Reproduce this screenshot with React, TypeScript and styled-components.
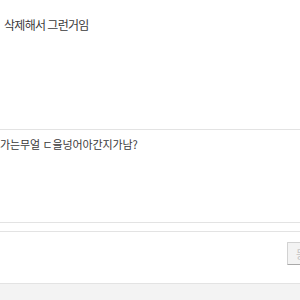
import React from "react";
import styled, { createGlobalStyle } from "styled-components";

const Global = createGlobalStyle`
  html, body { margin: 0; padding: 0; background: #ffffff; }
  body {
    width: 300px; height: 300px; overflow: hidden;
    font-family: "Noto Sans CJK KR", "Noto Sans", sans-serif;
  }
`;

const Page = styled.div`
  display: flex;
  flex-direction: column;
  width: 300px;
  height: 300px;
  overflow: hidden;
`;

const CommentList = styled.div`
  display: flex;
  flex-direction: column;
`;

const CommentItem = styled.div<{ $height: number; $top: number; $indent: number }>`
  height: ${(p) => p.$height}px;
  box-sizing: border-box;
  padding: ${(p) => p.$top}px 0 0 ${(p) => p.$indent}px;
  border-bottom: 1px solid #e3e3e3;
  flex-shrink: 0;
`;

const CommentText = styled.p<{ $size: number; $spacing: number }>`
  margin: 0;
  font-size: ${(p) => p.$size}px;
  line-height: 16px;
  letter-spacing: ${(p) => p.$spacing}px;
  color: #3a3a3a;
  white-space: nowrap;
`;

const WriteBox = styled.div`
  margin-top: 8px;
  height: 53px;
  box-sizing: border-box;
  border-top: 1px solid #e3e3e3;
  border-bottom: 1px solid #e3e3e3;
  display: flex;
  align-items: flex-start;
  padding-top: 10px;
  flex-shrink: 0;
`;

const InputArea = styled.div`
  flex: 1;
`;

const SubmitButton = styled.button`
  flex-shrink: 0;
  width: 40px;
  margin-right: -27px;
  height: 23px;
  box-sizing: border-box;
  background: #f3f3f3;
  border: 1px solid #d2d2d2;
  border-bottom-color: #a9a9a9;
  border-radius: 1px;
  padding: 0 0 0 8px;
  text-align: left;
  font-family: "Noto Sans CJK KR", sans-serif;
  font-size: 11px;
  color: #c4c4c4;
  white-space: nowrap;
  overflow: hidden;
`;

const Footer = styled.div`
  flex: 1;
  background: #f3f3f3;
`;

export default function App() {
  return (
    <>
      <Global />
      <Page>
        <CommentList>
          <CommentItem $height={130} $top={17} $indent={4}>
            <CommentText $size={12} $spacing={-0.7}>삭제해서 그런거임</CommentText>
          </CommentItem>
          <CommentItem $height={93} $top={6} $indent={0}>
            <CommentText $size={11} $spacing={-0.1}>가는무얼 ㄷ을넝어아간지가남?</CommentText>
          </CommentItem>
        </CommentList>
        <WriteBox>
          <InputArea />
          <SubmitButton>등록</SubmitButton>
        </WriteBox>
        <Footer />
      </Page>
    </>
  );
}
